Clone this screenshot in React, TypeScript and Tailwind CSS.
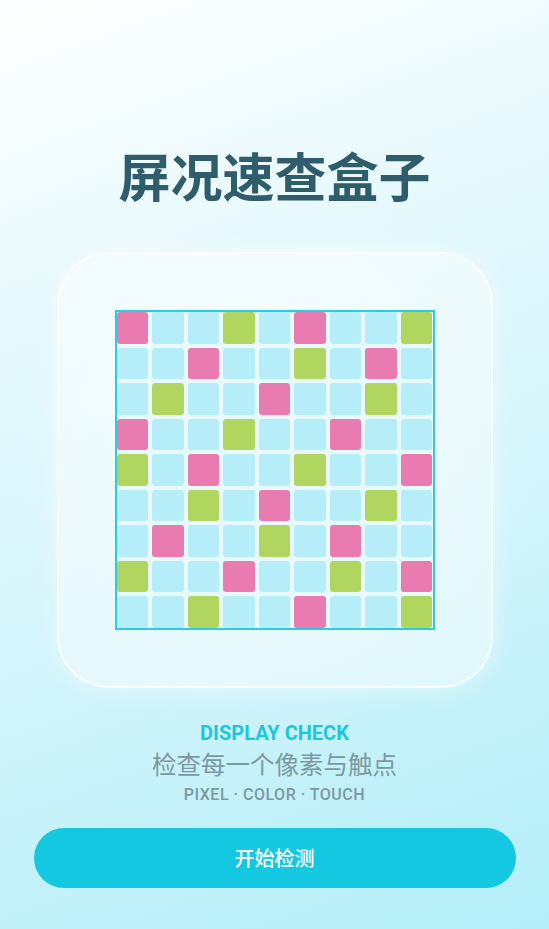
import React from "react";

const PATTERN = [
  "P..G.P..G",
  "..P..G.P.",
  ".G..P..G.",
  "P..G..P..",
  "G.P..G..P",
  "..G.P..G.",
  ".P..G.P..",
  "G..P..G.P",
  "..G..P..G",
];

function Cell({ t }: { t: string }) {
  if (t === "P") return <div className="rounded-[3px] bg-[#ea7bb1]" />;
  if (t === "G") return <div className="rounded-[3px] bg-[#b0d65f]" />;
  return <div className="rounded-[3px] bg-[#b5eef8]" />;
}

export default function App() {
  return (
    <div
      className="relative w-[549px] h-[929px] overflow-hidden flex flex-col items-center"
      style={{
        background:
          "radial-gradient(ellipse 70% 45% at 50% 50%, rgba(255,255,255,0.3), rgba(255,255,255,0) 70%), linear-gradient(160deg, #ffffff 0%, #e6f9fd 30%, #cff4fb 65%, #b3eef8 100%)",
        fontFamily: '"Noto Sans CJK SC", "Noto Sans", sans-serif',
      }}
    >
      <h1
        className="mt-[144px] text-[52px] leading-[62px] font-bold text-[#2f5d6c]"
        style={{ fontFamily: '"Noto Sans CJK SC", sans-serif' }}
      >
        屏况速查盒子
      </h1>

      <div className="mt-[46px] w-[436px] h-[436px] rounded-[52px] border-2 border-white/80 bg-white/45 shadow-[0_0_24px_rgba(255,255,255,0.45)] flex items-center justify-center">
        <div className="w-[320px] h-[320px] border-2 border-[#2ccbe0] bg-[#e8fafd] grid grid-cols-9 grid-rows-9 gap-[4px]">
          {PATTERN.flatMap((row, r) =>
            row.split("").map((t, c) => <Cell key={`${r}-${c}`} t={t} />)
          )}
        </div>
      </div>

      <div
        className="mt-[33px] text-[20px] leading-[24px] font-bold text-[#1cc6dd]"
        style={{ fontFamily: 'Roboto, "Liberation Sans", sans-serif' }}
      >
        DISPLAY CHECK
      </div>
      <div className="mt-[4px] text-[24.5px] leading-[30px] text-[#7c99a3]">
        检查每一个像素与触点
      </div>
      <div
        className="mt-[6px] text-[16px] leading-[20px] font-medium text-[#7c99a3] tracking-[0.5px]"
        style={{ fontFamily: 'Roboto, "Liberation Sans", sans-serif' }}
      >
        PIXEL · COLOR · TOUCH
      </div>

      <button className="mt-[23px] w-[482px] h-[60px] rounded-full bg-[#14c8e1] text-white text-[20px] font-medium flex items-center justify-center">
        开始检测
      </button>
    </div>
  );
}
